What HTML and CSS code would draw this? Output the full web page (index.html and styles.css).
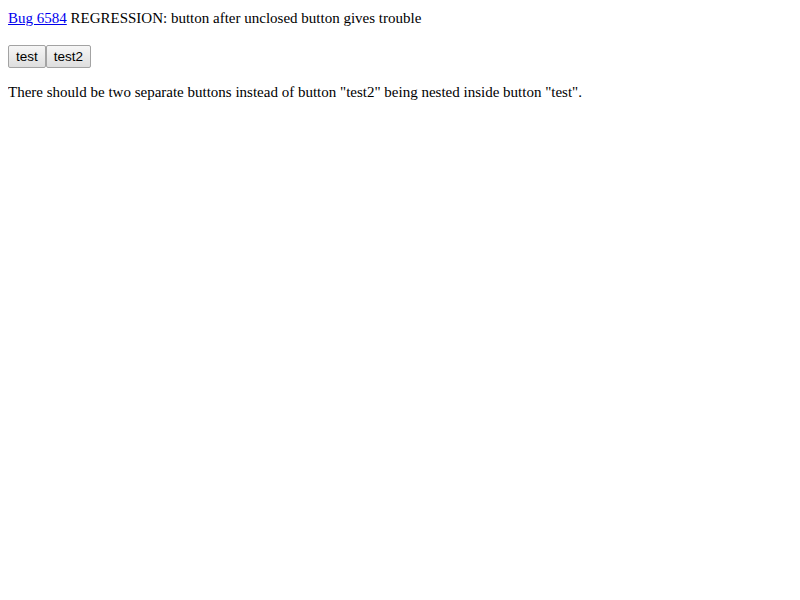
FILE: index.html
```html
<!DOCTYPE html>
<html>
<head>
<link rel="stylesheet" href="styles.css">
</head>
<body class="page">
<div class="title"><a class="bug" href="#">Bug 6584</a> REGRESSION: button after unclosed button gives trouble</div>
<div class="buttons"><button class="btn">test</button><button class="btn">test2</button></div>
<p class="note">There should be two separate buttons instead of button "test2" being nested inside button "test".</p>
</body>
</html>
```
FILE: styles.css
```css
.page {
  margin: 8px;
  font-family: "Liberation Serif", serif;
  font-size: 15px;
  color: #000;
  background: #fff;
}
.title { line-height: 17px; padding-top: 2px; }
.bug { color: #0000ee; text-decoration: underline; }
.buttons { margin: 18px 0 0; display: flex; }
.note { margin: 16px 0; line-height: 17px; }
.btn {
  font-family: "Liberation Sans", Arial, sans-serif;
  font-size: 13.5px;
  color: #000;
  height: 23px;
  padding: 0 7px;
  border: 1px solid #a3a3a3;
  border-radius: 2px;
  background: linear-gradient(#f6f6f6, #dedede);
  margin: 0;
}
```
